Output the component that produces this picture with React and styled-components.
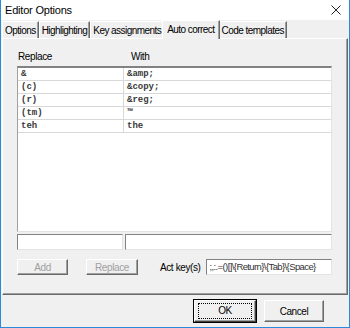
import React from 'react';
import styled, { createGlobalStyle } from 'styled-components';

const GlobalStyle = createGlobalStyle`
  html, body {
    margin: 0;
    padding: 0;
    background: #f0f0f0;
  }
  * {
    box-sizing: border-box;
  }
`;

const Window = styled.div`
  width: 350px;
  height: 328px;
  display: flex;
  flex-direction: column;
  background: #f0f0f0;
  border: 1px solid #2b8ad9;
  border-top: none;
  font-family: 'Liberation Sans', sans-serif;
  font-size: 10px;
  letter-spacing: -0.4px;
  color: #000;
  overflow: hidden;
`;

const TitleBar = styled.div`
  height: 20px;
  flex: 0 0 20px;
  background: #fff;
  display: flex;
  align-items: center;
  justify-content: space-between;
  padding: 0 8px 0 4px;
  font-size: 11px;
  letter-spacing: -0.2px;
`;

const CloseIcon = () => (
  <svg width="10" height="10" viewBox="0 0 10 10">
    <path d="M0.5 0.5 L9.5 9.5 M9.5 0.5 L0.5 9.5" stroke="#222" strokeWidth="1" />
  </svg>
);

const TabStrip = styled.div`
  display: flex;
  align-items: flex-end;
  height: 18px;
  padding-left: 1px;
  position: relative;
  z-index: 1;
`;

const Tab = styled.div`
  height: ${(p) => (p.$active ? '19px' : '17px')};
  margin-bottom: ${(p) => (p.$active ? '-1px' : '0')};
  padding: 0 ${(p) => (p.$active ? '4px' : '2px')};
  margin-left: ${(p) => (p.$active ? '-2px' : '0')};
  margin-right: ${(p) => (p.$active ? '-1px' : '0')};
  display: flex;
  align-items: center;
  background: #f0f0f0;
  border-left: 1px solid #fff;
  border-top: 1px solid #fff;
  border-right: 1px solid #696969;
  box-shadow: inset -1px 0 0 #a0a0a0;
  letter-spacing: -0.55px;
  white-space: nowrap;
  ${(p) => (p.$active ? 'z-index: 2; padding-bottom: 2px;' : '')}
`;

const Panel = styled.div`
  flex: 0 0 257px;
  margin: 0 1px;
  border-left: 1px solid #fff;
  border-top: 1px solid #fff;
  border-right: 1px solid #696969;
  border-bottom: 1px solid #696969;
  box-shadow: inset -1px -1px 0 #a0a0a0;
  padding: 12px 14px 0 14px;
  display: flex;
  flex-direction: column;
`;

const Headers = styled.div`
  display: grid;
  grid-template-columns: 105px 1fr;
  height: 15px;
  padding-left: 1px;
  span + span {
    padding-left: 8px;
  }
`;

const ListBox = styled.div`
  height: 166px;
  width: 315px;
  background: #fff;
  border-top: 2px solid #828282;
  border-left: 1px solid #a0a0a0;
  border-right: 1px solid #e3e3e3;
  border-bottom: 1px solid #e3e3e3;
`;

const Row = styled.div`
  display: grid;
  grid-template-columns: 105px 1fr;
  height: 13px;
  border-bottom: 1px solid #d8d8d8;
`;

const Cell = styled.div`
  padding-left: 3px;
  font-family: 'Liberation Mono', 'Courier New', monospace;
  font-size: 9px;
  letter-spacing: 0;
  line-height: 12px;
  font-weight: bold;
  color: #3a3a3a;
  & + & {
    border-left: 1px solid #d8d8d8;
  }
`;

const EditRow = styled.div`
  display: grid;
  grid-template-columns: 106px 1fr;
  gap: 2px;
  width: 315px;
  margin-top: 2px;
`;

const Edit = styled.div`
  height: 16px;
  flex: ${(p) => (p.$grow ? 1 : 'none')};
  min-width: 0;
  background: #fff;
  border-top: 1px solid #828282;
  border-left: 1px solid #828282;
  border-right: 1px solid #e3e3e3;
  border-bottom: 1px solid #e3e3e3;
  font-size: 9.5px;
  letter-spacing: -0.6px;
  line-height: 13px;
  color: #333;
  padding: 0 2px;
  white-space: nowrap;
  overflow: hidden;
`;

const ActionRow = styled.div`
  display: flex;
  align-items: center;
  margin-top: 9px;
  width: 315px;
`;

const Button = styled.div`
  width: ${(p) => p.$w}px;
  height: ${(p) => p.$h || 16}px;
  margin-right: ${(p) => p.$mr || 0}px;
  flex: none;
  display: flex;
  align-items: center;
  justify-content: center;
  background: #f0f0f0;
  border-top: 1px solid #fff;
  border-left: 1px solid #fff;
  border-right: 1px solid #696969;
  border-bottom: 1px solid #696969;
  box-shadow: inset -1px -1px 0 #a0a0a0;
  color: ${(p) => (p.$disabled ? '#a0a0a0' : '#000')};
  ${(p) =>
    p.$default
      ? `outline: 1px solid #000; border-color: #fff #404040 #404040 #fff;`
      : ''}
`;

const Focus = styled.span`
  border: 1px dotted #000;
  padding: 1px 19px;
  line-height: 12px;
`;

const ActLabel = styled.span`
  margin: 0 6px 0 2px;
  white-space: nowrap;
`;

const Footer = styled.div`
  flex: 1;
  display: flex;
  align-items: flex-start;
  padding: 5px 0 0 193px;
  gap: 8px;
`;

const rules = [
  ['&', '&amp;'],
  ['(c)', '&copy;'],
  ['(r)', '&reg;'],
  ['(tm)', '™'],
  ['teh', 'the'],
];

const tabs = ['Options', 'Highlighting', 'Key assignments', 'Auto correct', 'Code templates'];

export default function App() {
  return (
    <>
      <GlobalStyle />
      <Window>
        <TitleBar>
          <span>Editor Options</span>
          <CloseIcon />
        </TitleBar>
        <TabStrip>
          {tabs.map((t) => (
            <Tab key={t} $active={t === 'Auto correct'}>
              {t}
            </Tab>
          ))}
        </TabStrip>
        <Panel>
          <Headers>
            <span>Replace</span>
            <span>With</span>
          </Headers>
          <ListBox>
            {rules.map(([a, b]) => (
              <Row key={a}>
                <Cell>{a}</Cell>
                <Cell>{b}</Cell>
              </Row>
            ))}
          </ListBox>
          <EditRow>
            <Edit />
            <Edit />
          </EditRow>
          <ActionRow>
            <Button $w={51} $mr={18} $disabled>
              Add
            </Button>
            <Button $w={52} $mr={20} $disabled>
              Replace
            </Button>
            <ActLabel>Act key(s)</ActLabel>
            <Edit $grow>{';,:.=()[]\\{Return}\\{Tab}\\{Space}'}</Edit>
          </ActionRow>
        </Panel>
        <Footer>
          <Button $w={62} $h={22} $default>
            <Focus>OK</Focus>
          </Button>
          <Button $w={60} $h={22}>
            Cancel
          </Button>
        </Footer>
      </Window>
    </>
  );
}
